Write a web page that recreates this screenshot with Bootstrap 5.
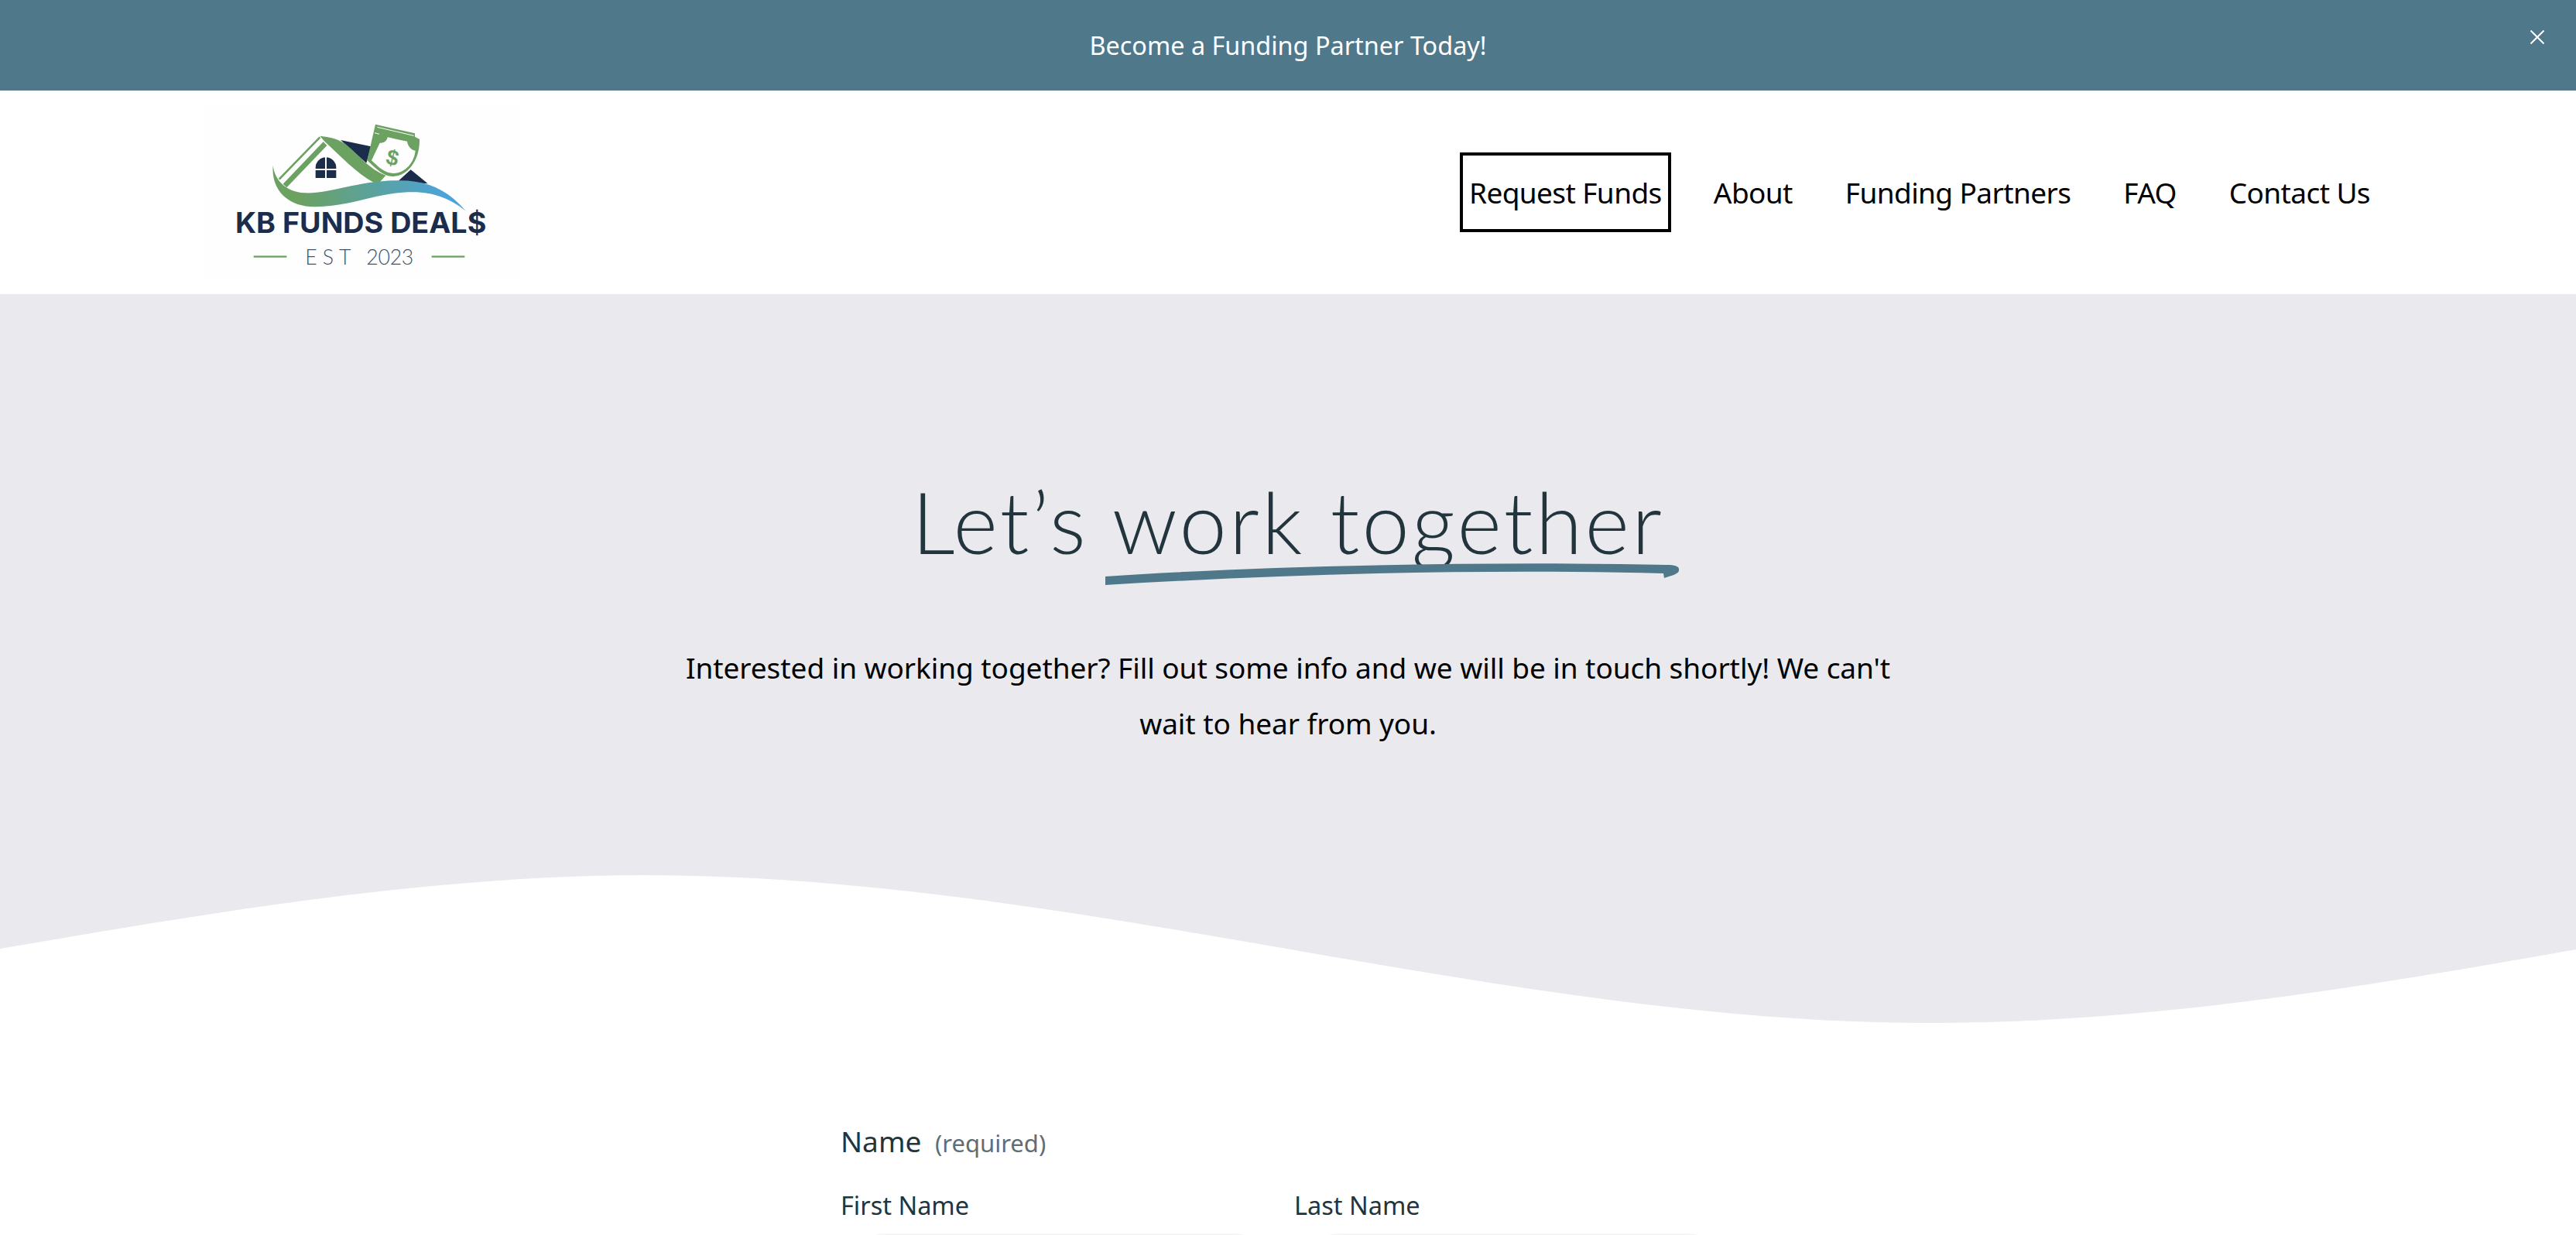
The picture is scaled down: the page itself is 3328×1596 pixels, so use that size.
<!DOCTYPE html>
<html lang="en">

<head>
    <meta charset="UTF-8">
    <meta name="viewport" content="width=device-width, initial-scale=1.0">
    <title>Let's work together - KB Funds Deals</title>
    <link href="https://cdn.jsdelivr.net/npm/bootstrap@5.3.0/dist/css/bootstrap.min.css" rel="stylesheet">
    <style>
        html, body { height: 1596px; overflow: hidden; }
        body { font-family: "Noto Sans", "Liberation Sans", sans-serif; color: #000; background: #fff; }
        .promo-bar { height: 117px; background: #4f788b; color: #fff; font-size: 32.4px; }
        .promo-close { top: 39px; right: 41px; width: 18px; height: 18px; padding: 0; background: none; border: 0; }
        .site-head { height: 263px; padding: 0 266px 0 260px; }
        .brand-art { width: 420px; height: 260px; display: block; margin-top: 3px; }
        .main-links { gap: 68px; font-size: 37px; letter-spacing: -0.6px; }
        .main-links a { color: #000; text-decoration: none; }
        .main-links a.cta-link { border: 4px solid #000; height: 103px; width: 273px; margin-right: -13px; display: flex; align-items: center; justify-content: center; white-space: nowrap; }
        .hero-zone { height: 945px; background: #e9e9ee; padding-top: 223px; }
        .hero-title { font-family: Lato, "Liberation Sans", sans-serif; font-weight: 300; font-size: 110px; letter-spacing: 3.2px; line-height: 140px; color: #22343c; margin: 0; }
        .title-stroke { top: 124px; left: 50%; margin-left: -236px; width: 741px; height: 30px; }
        .hero-copy { width: 1600px; font-size: 37px; letter-spacing: -0.06px; line-height: 72px; margin: 84px auto 0; }
        .wave-cut { left: 0; bottom: 0; width: 3328px; height: 195px; display: block; }
        .form-zone { width: 1156px; margin: 0 auto; color: #22343c; }
        .field-title { font-size: 37px; line-height: 52px; margin-top: 124px; }
        .field-note { font-size: 31px; color: #5f6e74; margin-left: 8px; }
        .name-row { gap: 19px; margin-top: 32px; }
        .name-col { width: 567px; }
        .name-label { font-size: 32.5px; line-height: 46px; display: block; margin-bottom: 13px; }
        .name-input { display: block; width: 100%; height: 130px; border: 0; border-radius: 60px; background: #f5f5f7; }
    </style>
</head>

<body>
    <div class="promo-bar position-relative d-flex align-items-center justify-content-center">
        <span>Become a Funding Partner Today!</span>
        <button class="promo-close position-absolute" type="button" aria-label="Close">
            <svg width="18" height="18" viewBox="0 0 18 18" class="d-block"><path d="M0.5 0.5 L17.5 17.5 M17.5 0.5 L0.5 17.5" stroke="#fff" stroke-width="2" fill="none"/></svg>
        </button>
    </div>

    <header class="site-head d-flex align-items-center justify-content-between">
        <svg class="brand-art" viewBox="0 0 1260 780" role="img" aria-label="KB Funds Deals logo">
            <defs>
                <linearGradient id="swoosh" gradientUnits="userSpaceOnUse" x1="380" x2="960" y1="0" y2="0">
                    <stop offset="0" stop-color="#6ba161"/>
                    <stop offset="1" stop-color="#4aa3dc"/>
                </linearGradient>
            </defs>
            <rect x="15" y="50" width="1225" height="670" fill="#fefefe"/>
            <!-- navy roof behind the bill -->
            <path d="M540 183 L658 208 L640 272 Z" fill="#1b2d4b"/>
            <path d="M812 298 L878 352 L760 345 Z" fill="#1b2d4b"/>
            <!-- green roof -->
            <path d="M302 335 L460 172" stroke="#6ba161" stroke-width="8" fill="none"/>
            <path d="M324 360 L480 197" stroke="#6ba161" stroke-width="20" fill="none"/>
            <path d="M460 167 C505 172 535 180 565 203 C610 240 650 295 715 320 L690 348 L668 347 C600 310 540 245 478 188 Z" fill="#6ba161"/>
            <!-- window -->
            <path d="M443 330 V290 A40 40 0 0 1 523 290 V330 Z" fill="#1b2d4b"/>
            <path d="M483 248 V332 M441 297 H525" stroke="#fefefe" stroke-width="6" fill="none"/>
            <!-- bill -->
            <path d="M675 122 L828 157 L828 170 L846 180 C848 255 805 322 742 324 C705 324 678 295 643 262 Z" fill="#6ba161"/>
            <path d="M682 133 L824 166 M672 155 L690 160" stroke="#fefefe" stroke-width="3" fill="none"/>
            <path d="M692 194 C708 196 720 186 722 172 L798 188 C800 206 814 222 830 224 C825 270 792 310 745 312 C715 312 690 292 660 262 Z" fill="#fefefe"/>
            <text x="741" y="280" text-anchor="middle" font-family="Liberation Sans, sans-serif" font-weight="700" font-size="84" fill="#6ba161" transform="rotate(14 741 254)">$</text>
            <!-- blue swoosh -->
            <path d="M278 282 C285 340 330 385 400 388 C500 392 610 340 760 340 C880 338 960 380 1025 458 C960 405 890 385 820 385 C680 385 590 440 440 442 C340 442 270 380 278 282 Z" fill="url(#swoosh)"/>
            <text x="132" y="542" textLength="973" lengthAdjust="spacingAndGlyphs" font-family="Inter, Lato, sans-serif" font-weight="700" font-size="110" fill="#1b2d4b">KB FUNDS DEAL$</text>
            <path d="M203 635 H331 M893 635 H1021" stroke="#6ba161" stroke-width="7" fill="none"/>
            <text x="403" y="667" textLength="177" font-family="Lato, sans-serif" font-weight="300" font-size="80" fill="#44546e">EST</text>
            <text x="640" y="667" textLength="183" font-family="Lato, sans-serif" font-weight="300" font-size="80" fill="#44546e">2023</text>
        </svg>
        <nav class="main-links d-flex align-items-center">
            <a class="cta-link" href="#">Request Funds</a>
            <a href="#">About</a>
            <a href="#">Funding Partners</a>
            <a href="#">FAQ</a>
            <a href="#">Contact Us</a>
        </nav>
    </header>

    <section class="hero-zone position-relative text-center">
        <div class="position-relative">
            <h1 class="hero-title">Let’s work together</h1>
            <svg class="title-stroke position-absolute" viewBox="0 0 741 30" preserveAspectRatio="none"><path d="M0 18 C200 4 500 -2 725 3 C738 3 742 6 741 10 C741 14 735 16 722 20 L721 14 C500 8 250 14 0 29 Z" fill="#4f788b"/></svg>
        </div>
        <p class="hero-copy">Interested in working together? Fill out some info and we will be in touch shortly! We can't wait to hear from you.</p>
        <svg class="wave-cut position-absolute" viewBox="0 0 3328 195" preserveAspectRatio="none"><path d="M0 96 C280 48 560 1 832 1 C1390 1 1940 192 2494 192 C2780 192 3060 144 3328 97 V195 H0 Z" fill="#fff"/></svg>
    </section>

    <form class="form-zone">
        <div class="field-title">Name <span class="field-note">(required)</span></div>
        <div class="name-row d-flex">
            <div class="name-col"><label class="name-label" for="firstName">First Name</label><input class="name-input" id="firstName" type="text"></div>
            <div class="name-col"><label class="name-label" for="lastName">Last Name</label><input class="name-input" id="lastName" type="text"></div>
        </div>
    </form>

    <script src="https://cdn.jsdelivr.net/npm/bootstrap@5.3.0/dist/js/bootstrap.bundle.min.js"></script>
</body>

</html>
